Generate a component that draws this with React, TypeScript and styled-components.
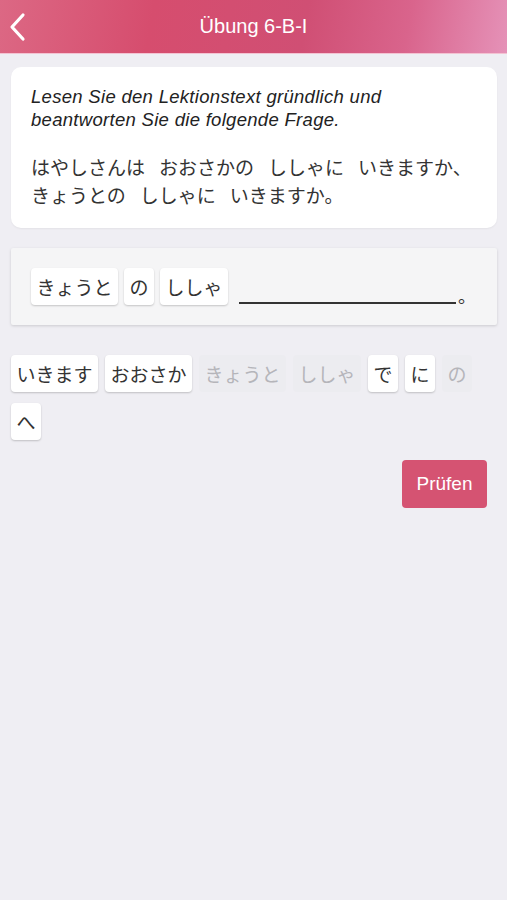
import React from 'react';
import styled, { createGlobalStyle } from 'styled-components';

const GlobalStyle = createGlobalStyle`
  body {
    margin: 0;
    background: #efeef3;
    font-family: "Liberation Sans", "Noto Sans CJK JP", sans-serif;
    color: #222;
  }
`;

type Word = { text: string; used?: boolean };

const questionLines: string[][] = [
  ['はやしさんは', 'おおさかの', 'ししゃに', 'いきますか、'],
  ['きょうとの', 'ししゃに', 'いきますか。'],
];

const answer: Word[] = [{ text: 'きょうと' }, { text: 'の' }, { text: 'ししゃ' }];

const choices: Word[] = [
  { text: 'いきます' },
  { text: 'おおさか' },
  { text: 'きょうと', used: true },
  { text: 'ししゃ', used: true },
  { text: 'で' },
  { text: 'に' },
  { text: 'の', used: true },
  { text: 'へ' },
];

export default function App() {
  return (
    <>
      <GlobalStyle />
      <Header>
        <BackButton>
          <svg width="20" height="30" viewBox="0 0 20 30">
            <path d="M15 3 L4 15 L15 27" fill="none" stroke="#fff" strokeWidth="3.2" strokeLinecap="round" strokeLinejoin="round" />
          </svg>
        </BackButton>
        <Title>Übung 6-B-I</Title>
      </Header>
      <Main>
        <QuestionCard>
          <Instruction>Lesen Sie den Lektionstext gründlich und beantworten Sie die folgende Frage.</Instruction>
          <Question>
            {questionLines.map((line, i) => (
              <QuestionLine key={i}>
                {line.map((w, j) => (
                  <span key={j}>{w}</span>
                ))}
              </QuestionLine>
            ))}
          </Question>
        </QuestionCard>
        <AnswerBox>
          {answer.map((w, i) => (
            <Chip key={i}>{w.text}</Chip>
          ))}
          <Blank />
          <Period>。</Period>
        </AnswerBox>
        <ChoiceList>
          {choices.map((w, i) => (
            <Chip key={i} $used={w.used}>{w.text}</Chip>
          ))}
        </ChoiceList>
        <Actions>
          <CheckButton>Prüfen</CheckButton>
        </Actions>
      </Main>
    </>
  );
}

const Header = styled.header`
  position: relative;
  height: 53px;
  display: flex;
  align-items: center;
  justify-content: center;
  background: linear-gradient(100deg, #dc6884 0%, #d64d6e 30%, #d04f74 60%, #d9648c 80%, #e592b8 100%);
  border-bottom: 1px solid #f3c3d2;
`;

const BackButton = styled.div`
  position: absolute;
  left: 8px;
  top: 12px;
  display: flex;
`;

const Title = styled.h1`
  margin: 0;
  font-size: 20px;
  font-weight: normal;
  color: #fff;
`;

const Main = styled.main`
  padding: 13px 10px 0 11px;
  display: flex;
  flex-direction: column;
`;

const QuestionCard = styled.section`
  background: #fff;
  border-radius: 10px;
  padding: 18px 20px 19px;
  box-shadow: 0 1px 2px rgba(0, 0, 0, 0.05);
`;

const Instruction = styled.p`
  margin: 0;
  max-width: 380px;
  font-style: italic;
  font-size: 18.5px;
  letter-spacing: 0.3px;
  line-height: 23px;
  color: #222;
`;

const Question = styled.div`
  margin-top: 22px;
  font-family: "Noto Sans CJK JP", sans-serif;
  font-size: 19px;
  line-height: 28px;
  color: #333;
`;

const QuestionLine = styled.div`
  display: flex;
  gap: 14px;
`;

const AnswerBox = styled.section`
  margin-top: 20px;
  background: #f5f5f6;
  border-radius: 2px;
  box-shadow: 0 1px 3px rgba(0, 0, 0, 0.15);
  padding: 20px 20px;
  display: flex;
  align-items: flex-end;
  gap: 6px;
`;

const Chip = styled.span<{ $used?: boolean }>`
  display: inline-flex;
  align-items: center;
  justify-content: center;
  height: 37px;
  padding: 0 5.5px;
  border-radius: 4px;
  font-family: "Noto Sans CJK JP", sans-serif;
  font-size: 19px;
  background: ${p => (p.$used ? '#ececf0' : '#fff')};
  color: ${p => (p.$used ? '#b5b5ba' : '#333')};
  box-shadow: ${p => (p.$used ? 'none' : '0 1px 2px rgba(0, 0, 0, 0.2)')};
`;

const Blank = styled.span`
  margin-left: 5px;
  width: 217px;
  height: 2px;
  margin-bottom: 1px;
  background: #333;
`;

const Period = styled.span`
  font-family: "Noto Sans CJK JP", sans-serif;
  font-size: 18px;
  line-height: 20px;
  color: #333;
  margin-left: -4px;
`;

const ChoiceList = styled.section`
  margin-top: 30px;
  display: flex;
  flex-wrap: wrap;
  column-gap: 7px;
  row-gap: 11px;
`;

const Actions = styled.div`
  margin-top: 20px;
  display: flex;
  justify-content: flex-end;
  padding-right: 10px;
`;

const CheckButton = styled.button`
  width: 85px;
  height: 48px;
  border: none;
  border-radius: 4px;
  background: #d55372;
  color: #fff;
  font-family: "Liberation Sans", sans-serif;
  font-size: 19px;
`;
